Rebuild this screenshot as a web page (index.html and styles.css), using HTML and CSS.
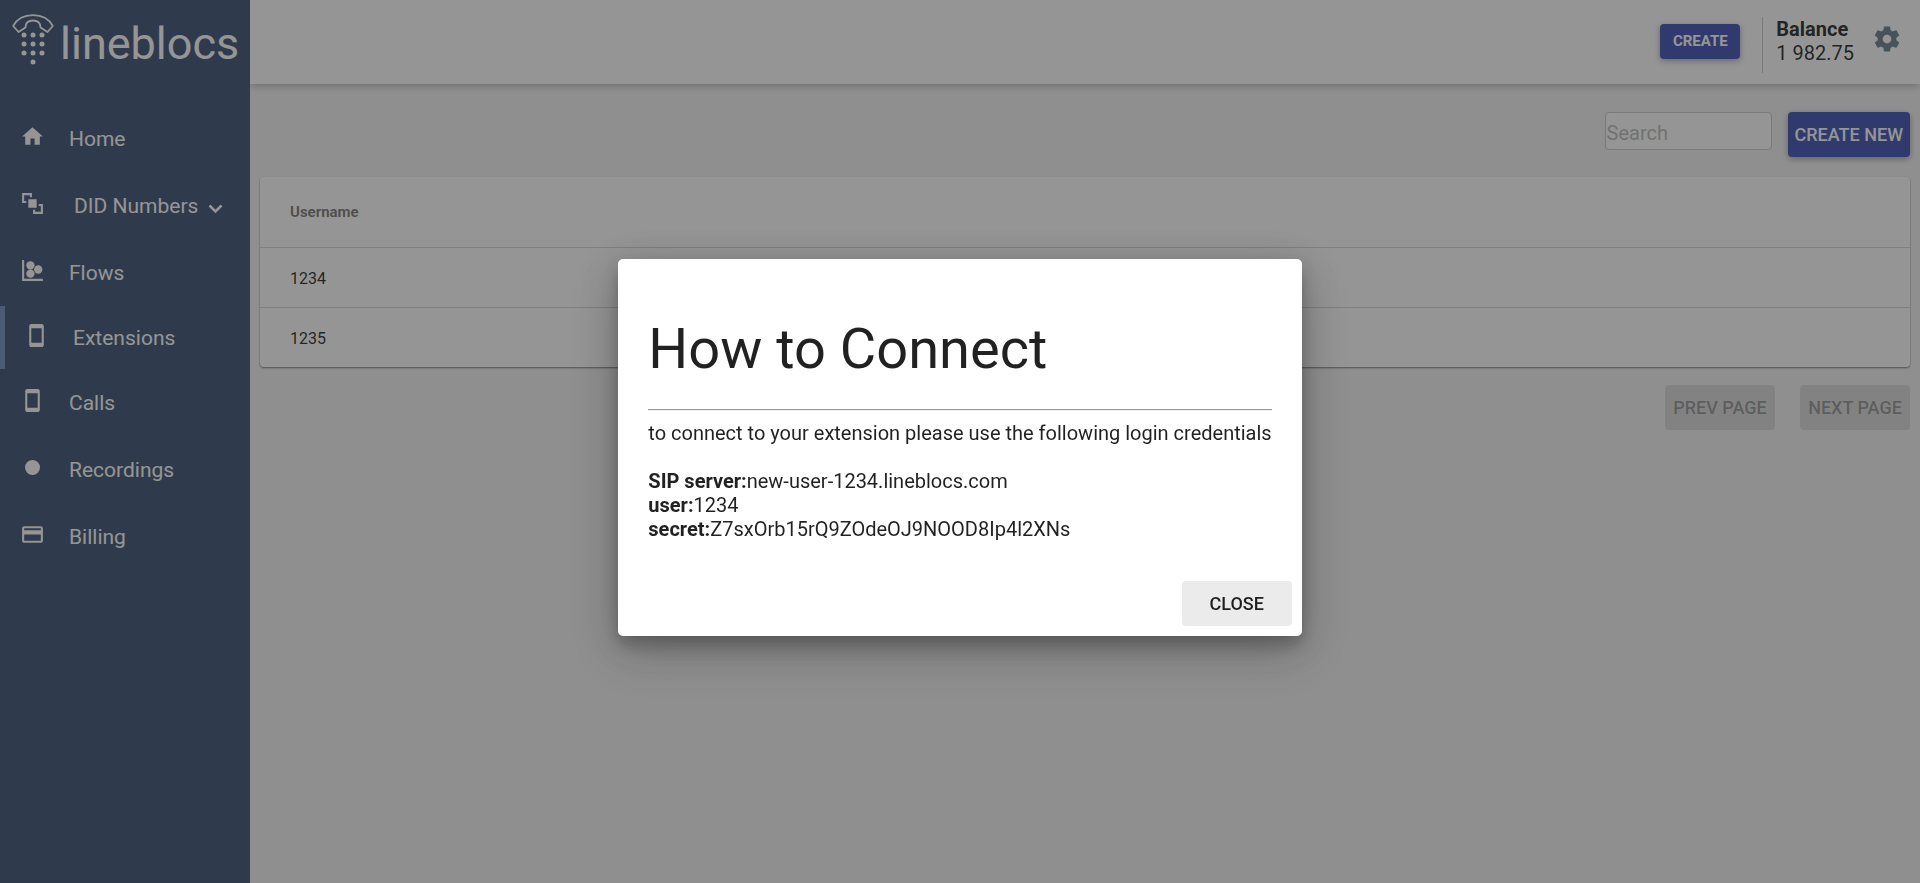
FILE: index.html
```html
<!DOCTYPE html>
<html lang="en">
<head>
<meta charset="utf-8">
<title>Lineblocs - Extensions</title>
<link rel="stylesheet" href="styles.css">
</head>
<body>
<div class="app">
  <aside class="sidebar">
    <a class="logo" href="#">
      <svg class="logo-mark" viewBox="0 0 42 52" aria-hidden="true">
        <path d="M1.2 12C5 5 12 1.200 21 1.200S37 5 40.800 12L35.500 18L28.500 13.500Q28.500 6.500 21 6.500T13.500 13.500L6.500 18Z" fill="none" stroke="currentColor" stroke-width="1.800" stroke-linejoin="round"/>
        <g fill="currentColor">
          <circle cx="12" cy="21" r="2.500"/><circle cx="21" cy="21" r="2.500"/><circle cx="30" cy="21" r="2.500"/>
          <circle cx="12" cy="30" r="2.500"/><circle cx="21" cy="30" r="2.500"/><circle cx="30" cy="30" r="2.500"/>
          <circle cx="12" cy="39" r="2.500"/><circle cx="21" cy="39" r="2.500"/><circle cx="30" cy="39" r="2.500"/>
          <circle cx="21" cy="48" r="2.500"/>
        </g>
      </svg>
      <span class="logo-text">lineblocs</span>
    </a>
    <nav class="menu">
      <a class="menu-item" href="#">
        <svg class="icon" viewBox="0 0 24 24"><path d="M10 20v-6h4v6h5v-8h3L12 3 2 12h3v8z"/></svg>
        <span>Home</span>
      </a>
      <a class="menu-item menu-parent" href="#">
        <svg class="icon" viewBox="0 0 24 24"><path d="M2 2h9.500v4H9.500V4H4v5.500h2v2H2zM8 8h8v8H8zM18 12.500h4V22h-9.500v-4h2v2H20v-5.500h-2z"/></svg>
        <span>DID Numbers</span>
        <svg class="chevron" viewBox="0 0 15 15"><path d="M1.500 4.500l6 6 6-6"/></svg>
      </a>
      <a class="menu-item" href="#">
        <svg class="icon" viewBox="0 0 24 24"><path d="M2 2h2v18h18v2H2z"/><circle cx="10" cy="7" r="4"/><circle cx="17.500" cy="11" r="4"/><circle cx="10" cy="15" r="4"/></svg>
        <span>Flows</span>
      </a>
      <a class="menu-item active" href="#">
        <svg class="icon" viewBox="0 0 24 24"><path d="M17 1.010L7 1c-1.100 0-1.990.9-1.990 2v18c0 1.100.89 2 1.990 2h10c1.100 0 2-.9 2-2V3c0-1.100-.9-1.990-2-1.990zM17 19H7V5h10v14z"/></svg>
        <span>Extensions</span>
      </a>
      <a class="menu-item" href="#">
        <svg class="icon" viewBox="0 0 24 24"><path d="M17 1.010L7 1c-1.100 0-1.990.9-1.990 2v18c0 1.100.89 2 1.990 2h10c1.100 0 2-.9 2-2V3c0-1.100-.9-1.990-2-1.990zM17 19H7V5h10v14z"/></svg>
        <span>Calls</span>
      </a>
      <a class="menu-item" href="#">
        <svg class="icon" viewBox="0 0 24 24"><circle cx="12" cy="12" r="7.200"/></svg>
        <span>Recordings</span>
      </a>
      <a class="menu-item" href="#">
        <svg class="icon" viewBox="0 0 24 24"><path d="M20 4H4c-1.110 0-1.990.89-1.990 2L2 18c0 1.110.89 2 2 2h16c1.110 0 2-.89 2-2V6c0-1.110-.89-2-2-2zm0 14H4v-6h16v6zm0-10H4V6h16v2z"/></svg>
        <span>Billing</span>
      </a>
    </nav>
  </aside>
  <div class="page">
    <header class="topbar">
      <button class="btn btn-primary btn-small" type="button">CREATE</button>
      <div class="balance">
        <strong>Balance</strong>
        <span>1 982.75</span>
      </div>
      <button class="settings" type="button" aria-label="Settings">
        <svg viewBox="0 0 24 24"><path d="M19.430 12.980c.04-.32.07-.64.07-.98s-.03-.66-.07-.98l2.110-1.650c.19-.15.24-.42.12-.64l-2-3.460c-.12-.22-.39-.3-.61-.22l-2.490 1c-.52-.4-1.080-.73-1.690-.98l-.38-2.650C14.460 2.180 14.250 2 14 2h-4c-.25 0-.46.18-.49.42l-.38 2.650c-.61.25-1.170.59-1.690.98l-2.490-1c-.23-.09-.49 0-.61.22l-2 3.460c-.13.22-.07.49.12.64l2.110 1.650c-.04.32-.07.65-.07.98s.03.66.07.98l-2.110 1.650c-.19.15-.24.42-.12.64l2 3.460c.12.22.39.3.61.22l2.490-1c.52.4 1.080.73 1.690.98l.38 2.650c.03.24.24.42.49.42h4c.25 0 .46-.18.49-.42l.38-2.650c.61-.25 1.170-.59 1.690-.98l2.490 1c.23.09.49 0 .61-.22l2-3.460c.12-.22.07-.49-.12-.64l-2.110-1.650zM12 15.500c-1.930 0-3.500-1.570-3.500-3.500s1.570-3.500 3.500-3.500 3.500 1.570 3.500 3.500-1.570 3.500-3.500 3.500z"/></svg>
      </button>
    </header>
    <main class="content">
      <div class="toolbar">
        <input class="search" type="text" placeholder="Search" aria-label="Search">
        <button class="btn btn-primary" type="button">CREATE NEW</button>
      </div>
      <div class="card">
        <table class="table">
          <thead><tr><th scope="col">Username</th></tr></thead>
          <tbody>
            <tr><td>1234</td></tr>
            <tr><td>1235</td></tr>
          </tbody>
        </table>
      </div>
      <div class="pager">
        <button class="btn" type="button" disabled>PREV PAGE</button>
        <button class="btn" type="button" disabled>NEXT PAGE</button>
      </div>
    </main>
  </div>
</div>
<div class="backdrop"></div>
<div class="dialog-container">
  <section class="dialog" role="dialog" aria-modal="true" aria-labelledby="dialog-title">
    <div class="dialog-content">
      <h1 id="dialog-title">How to Connect</h1>
      <hr>
      <p>to connect to your extension please use the following login credentials</p>
      <ul class="credentials">
        <li><strong>SIP server:</strong>new-user-1234.lineblocs.com</li>
        <li><strong>user:</strong>1234</li>
        <li><strong>secret:</strong>Z7sxOrb15rQ9ZOdeOJ9NOOD8Ip4l2XNs</li>
      </ul>
    </div>
    <div class="dialog-actions">
      <button class="btn btn-close" type="button">CLOSE</button>
    </div>
  </section>
</div>
</body>
</html>
```

FILE: styles.css
```css
* {
  box-sizing: border-box;
}

body {
  margin: 0;
  font-family: Roboto, "Liberation Sans", sans-serif;
  font-size: 20px;
  line-height: 24px;
  color: rgba(0, 0, 0, 0.87);
  background: #f4f4f4;
}

button,
input {
  font-family: inherit;
}

.app {
  display: flex;
  min-height: 100vh;
}

/* Sidebar */
.sidebar {
  position: relative;
  z-index: 1;
  flex: none;
  width: 250px;
  background: #3c5374;
  color: #fff;
}

.logo {
  display: flex;
  align-items: flex-start;
  gap: 6px;
  height: 105px;
  padding: 14px 0 0 12px;
  color: #fff;
  text-decoration: none;
}

.logo-mark {
  flex: none;
  width: 42px;
  height: 52px;
}

.logo-text {
  font-size: 45px;
  line-height: 60px;
}

.menu {
  display: flex;
  flex-direction: column;
}

.menu-item {
  display: flex;
  align-items: center;
  gap: 24px;
  height: 67px;
  padding-left: 20px;
  font-size: 21px;
  color: #fff;
  text-decoration: none;
}

.menu-item.active {
  height: 63px;
  padding-left: 19px;
  border-left: 5px solid #7290c0;
}

.menu-parent {
  gap: 10px;
}

.menu-parent .icon {
  margin-right: 19px;
}

.icon {
  flex: none;
  width: 25px;
  height: 25px;
  margin-bottom: 4px;
  fill: currentColor;
}

.chevron {
  width: 15px;
  height: 15px;
  margin-top: 6px;
  fill: none;
  stroke: currentColor;
  stroke-width: 2.5;
}

/* Top bar */
.page {
  flex: 1;
  min-width: 0;
}

.topbar {
  display: flex;
  align-items: center;
  justify-content: flex-end;
  height: 84px;
  padding-right: 18px;
  background: #fff;
  box-shadow: 0 2px 8px rgba(0, 0, 0, 0.25);
}

.balance {
  display: flex;
  flex-direction: column;
  margin: 5px 18px 0 22px;
  padding: 0 0 8px 13px;
  border-left: 1px solid #ccc;
}

.balance strong,
.credentials strong {
  font-weight: 700;
}

.settings {
  display: flex;
  margin-bottom: 6px;
  padding: 0;
  border: 0;
  background: none;
}

.settings svg {
  width: 30px;
  height: 30px;
  fill: #69828e;
}

/* Buttons */
.btn {
  height: 45px;
  min-width: 110px;
  padding: 0 7px;
  border: 0;
  border-radius: 4px;
  font-size: 18px;
  font-weight: 500;
  color: rgba(0, 0, 0, 0.87);
}

.btn-primary {
  background: #3f51b5;
  color: #fff;
  box-shadow: 0 2px 6px rgba(0, 0, 0, 0.35);
}

.btn-small {
  height: 35px;
  min-width: 80px;
  margin-bottom: 2px;
  font-size: 15px;
  font-weight: 700;
}

.btn:disabled {
  background: #dadada;
  color: rgba(0, 0, 0, 0.32);
}

.btn-close {
  background: #ebebeb;
}

/* Extensions list */
.content {
  padding: 28px 10px;
}

.toolbar {
  display: flex;
  align-items: flex-start;
  justify-content: flex-end;
  gap: 16px;
  margin-bottom: 20px;
}

.search {
  width: 167px;
  height: 38px;
  padding: 4px 0 0 1px;
  border: 1px solid #ccc;
  border-radius: 4px;
  font-size: 20px;
  background: #fff;
}

.search::placeholder {
  color: #bbb;
}

.card {
  border-radius: 4px;
  background: #fff;
  box-shadow: 0 1px 2px rgba(0, 0, 0, 0.5);
}

.table {
  width: 100%;
  border-collapse: collapse;
  text-align: left;
}

.table th {
  height: 70px;
  padding: 0 30px;
  font-size: 15px;
  font-weight: 700;
  color: rgba(0, 0, 0, 0.54);
}

.table td {
  height: 60px;
  padding: 3px 30px 0;
  border-top: 1px solid #d6d6d6;
  font-size: 16px;
}

.pager {
  display: flex;
  justify-content: flex-end;
  gap: 25px;
  margin-top: 18px;
}

/* Dialog */
.backdrop {
  position: fixed;
  inset: 0;
  z-index: 2;
  background: rgba(33, 33, 33, 0.48);
}

.dialog-container {
  position: fixed;
  inset: 0;
  z-index: 3;
  display: flex;
  align-items: center;
  justify-content: center;
  padding-top: 12px;
}

.dialog {
  max-width: 80%;
  border-radius: 5px;
  background: #fff;
  box-shadow: 0 9px 16px rgba(0, 0, 0, 0.2), 0 16px 48px rgba(0, 0, 0, 0.2), 0 8px 40px rgba(0, 0, 0, 0.12);
}

.dialog-content {
  padding: 30px;
}

.dialog h1 {
  margin: 27px 0;
  font-size: 56px;
  line-height: 66px;
  font-weight: 400;
}

.dialog hr {
  height: 2px;
  margin: 0 0 10px;
  border: 0;
  border-top: 1px solid #9a9a9a;
  border-bottom: 1px solid #eee;
}

.dialog p {
  margin: 0 0 24px;
}

.credentials {
  margin: 0;
  padding: 0;
  list-style: none;
}

.dialog-actions {
  display: flex;
  justify-content: flex-end;
  padding: 10px;
}
```
